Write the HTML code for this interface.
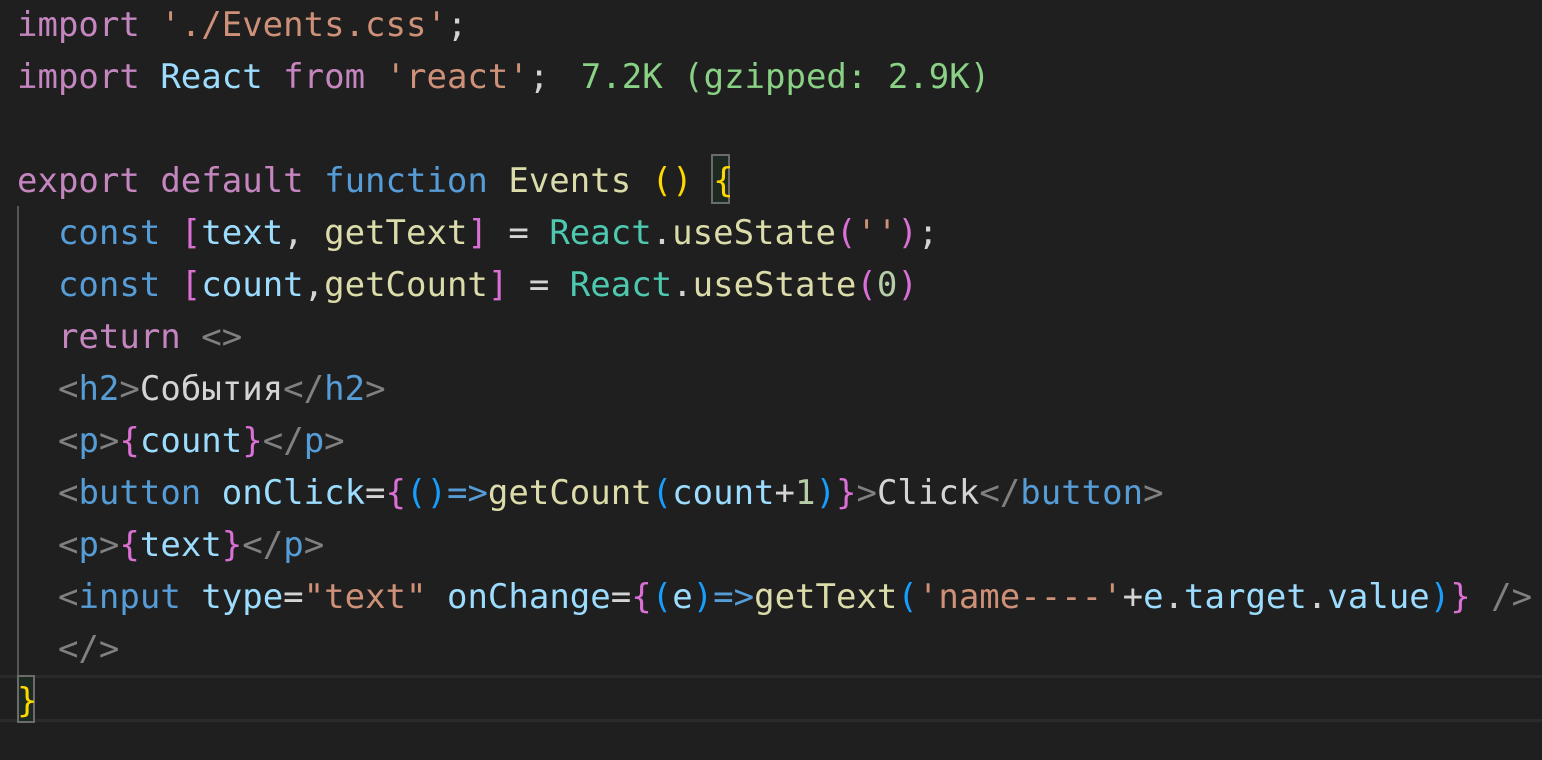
<!DOCTYPE html>
<html><head><meta charset="utf-8"><style>
body{margin:0;background:#1f1f1f;width:1542px;height:760px;overflow:hidden;position:relative}
.l{position:absolute;left:17px;height:52px;line-height:52px;font-family:"DejaVu Sans Mono","Liberation Mono",monospace;font-size:34px;color:#d4d4d4;white-space:pre}
.k{color:#c586c0}.s{color:#ce9178}.v{color:#9cdcfe}.b{color:#569cd6}.f{color:#dcdcaa}.c{color:#4ec9b0}
.y{color:#ffd700}.p{color:#da70d6}.t{color:#808080}.g{color:#89d185}.n{color:#b5cea8}.w{color:#d4d4d4}.bl{color:#179fff}
</style></head><body>
<div style="position:absolute;left:17px;top:206px;width:2px;height:470px;background:#555"></div>
<div style="position:absolute;left:0;top:675px;width:1542px;height:47px;border-top:3px solid #2a2a2a;border-bottom:3px solid #2a2a2a;box-sizing:border-box"></div>
<div style="position:absolute;left:17px;top:675px;width:18px;height:48px;border:2px solid #6b6b6b;box-sizing:border-box;background:#1c2a22"></div>
<div style="position:absolute;left:711px;top:154px;width:19px;height:50px;border:2px solid #6b6b6b;box-sizing:border-box;background:#1c2a22"></div>
<div class="l" style="top:-1px"><span class="k">import</span> <span class="s">'./Events.css'</span>;</div>
<div class="l" style="top:51px"><span class="k">import</span> <span class="v">React</span> <span class="k">from</span> <span class="s">'react'</span>; <span class="g" style="margin-left:11px">7.2K (gzipped: 2.9K)</span></div>
<div class="l" style="top:155px"><span class="k">export</span> <span class="k">default</span> <span class="b">function</span> <span class="f">Events</span> <span class="y">()</span> <span class="y">{</span></div>
<div class="l" style="top:207px">  <span class="b">const</span> <span class="p">[</span><span class="v">text</span>, <span class="f">getText</span><span class="p">]</span> = <span class="c">React</span>.<span class="f">useState</span><span class="p">(</span><span class="s">''</span><span class="p">)</span>;</div>
<div class="l" style="top:259px">  <span class="b">const</span> <span class="p">[</span><span class="v">count</span>,<span class="f">getCount</span><span class="p">]</span> = <span class="c">React</span>.<span class="f">useState</span><span class="p">(</span><span class="n">0</span><span class="p">)</span></div>
<div class="l" style="top:311px">  <span class="k">return</span> <span class="t">&lt;&gt;</span></div>
<div class="l" style="top:363px">  <span class="t">&lt;</span><span class="b">h2</span><span class="t">&gt;</span>События<span class="t">&lt;/</span><span class="b">h2</span><span class="t">&gt;</span></div>
<div class="l" style="top:415px">  <span class="t">&lt;</span><span class="b">p</span><span class="t">&gt;</span><span class="p">{</span><span class="v">count</span><span class="p">}</span><span class="t">&lt;/</span><span class="b">p</span><span class="t">&gt;</span></div>
<div class="l" style="top:467px">  <span class="t">&lt;</span><span class="b">button</span> <span class="v">onClick</span>=<span class="p">{</span><span class="bl">()</span><span class="b">=&gt;</span><span class="f">getCount</span><span class="bl">(</span><span class="v">count</span>+<span class="n">1</span><span class="bl">)</span><span class="p">}</span><span class="t">&gt;</span>Click<span class="t">&lt;/</span><span class="b">button</span><span class="t">&gt;</span></div>
<div class="l" style="top:519px">  <span class="t">&lt;</span><span class="b">p</span><span class="t">&gt;</span><span class="p">{</span><span class="v">text</span><span class="p">}</span><span class="t">&lt;/</span><span class="b">p</span><span class="t">&gt;</span></div>
<div class="l" style="top:571px">  <span class="t">&lt;</span><span class="b">input</span> <span class="v">type</span>=<span class="s">"text"</span> <span class="v">onChange</span>=<span class="p">{</span><span class="bl">(</span><span class="v">e</span><span class="bl">)</span><span class="b">=&gt;</span><span class="f">getText</span><span class="bl">(</span><span class="s">'name----'</span>+<span class="v">e</span>.<span class="v">target</span>.<span class="v">value</span><span class="bl">)</span><span class="p">}</span> <span class="t">/&gt;</span></div>
<div class="l" style="top:623px">  <span class="t">&lt;/&gt;</span></div>
<div class="l" style="top:675px"><span class="y">}</span></div>
</body></html>
